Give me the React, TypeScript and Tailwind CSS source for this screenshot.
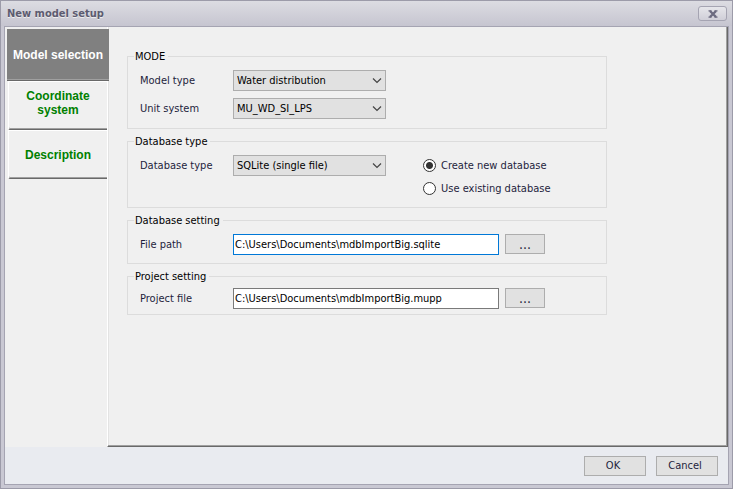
import { useState } from "react";
import type { ReactNode } from "react";

const tabs = [
  { id: "model", title: "Model selection", spacing: "" },
  { id: "coordinate", title: "Coordinate system", spacing: "pb-1.5" },
  { id: "description", title: "Description", spacing: "" },
];

function Group({ title, className, children }: { title: string; className: string; children: ReactNode }) {
  return (
    <fieldset className="border border-[#dcdcdc] px-1.5">
      <legend className="h-[15px] pr-[3px] pl-px leading-[15px] text-black">{title}</legend>
      <div className={`pl-1.5 ${className}`}>{children}</div>
    </fieldset>
  );
}

function Row({ id, label, children }: { id: string; label: string; children: ReactNode }) {
  return (
    <div className="flex items-center">
      <label htmlFor={id} className="w-[93px] shrink-0 leading-[19px]">{label}</label>
      {children}
    </div>
  );
}

function Dropdown({ id, value }: { id: string; value: string }) {
  return (
    <div className="relative w-[153px]">
      <select id={id} className="block h-[21px] w-full appearance-none border border-[#adadad] bg-[#e1e1e1] pl-[3px] pr-5 leading-[19px] text-black outline-none">
        <option>{value}</option>
      </select>
      <svg className="pointer-events-none absolute top-2 right-1" width="10" height="6" viewBox="0 0 10 6" fill="none" stroke="#444" strokeWidth="1.2">
        <path d="M1 0.5 5 4.5 9 0.5" />
      </svg>
    </div>
  );
}

function PathField({ id, value, focused }: { id: string; value: string; focused?: boolean }) {
  return (
    <div className="flex gap-1.5">
      <input
        id={id}
        type="text"
        defaultValue={value}
        className={`h-[21px] w-[266px] border bg-white px-px leading-[19px] text-black outline-none ${focused ? "border-[#0078d7]" : "border-[#7a7a7a]"}`}
      />
      <button type="button" aria-label="Browse" className="h-5 w-10 border border-[#adadad] bg-[#e1e1e1] text-sm leading-[14px]">...</button>
    </div>
  );
}

function Radio({ label, checked, onChange }: { label: string; checked: boolean; onChange: () => void }) {
  return (
    <label className="flex h-[21px] items-center gap-[5px] leading-[19px]">
      <input
        type="radio"
        name="database"
        checked={checked}
        onChange={onChange}
        className="size-[13px] appearance-none rounded-full border border-[#333] bg-white checked:bg-[radial-gradient(circle,#333_3px,#fff_4px)]"
      />
      {label}
    </label>
  );
}

export default function App() {
  const [tab, setTab] = useState("model");
  const [createNew, setCreateNew] = useState(true);

  return (
    <div className="flex min-h-screen flex-col border border-[#9c9ba9] bg-[#c9c8d3] px-[3px] pb-[3px] font-['DejaVu_Sans_Condensed','Noto_Sans',sans-serif] text-[11px] text-[#1e1e3c]">
      <header className="-mx-[3px] flex h-[25px] items-center justify-between bg-linear-to-b from-[#dcdce2] to-[#c6c5d0] pr-[5px] pl-1.5">
        <h1 className="pt-0.5 font-bold text-[#5c5b70] [text-shadow:0_1px_0_#eee]">New model setup</h1>
        <button type="button" aria-label="Close" className="flex h-[15px] w-[29px] items-center justify-center rounded-[3px] border border-[#a5a4b2] bg-linear-to-b from-[#e6e6eb] to-[#d0cfd8]">
          <svg width="10" height="8" viewBox="0 0 10 8" fill="none" stroke="#6c6b80">
            <path strokeWidth="2.4" d="M2 1 8 7M8 1 2 7" />
            <path strokeWidth="1.4" d="M0.5 0.9H3.5M6.5 0.9H9.5M0.5 7.1H3.5M6.5 7.1H9.5" />
          </svg>
        </button>
      </header>
      <div className="flex grow flex-col border border-[#a5a4b2] bg-[#e9ebf0]">
        <main className="flex grow bg-[#f0f0f0]">
          <nav className="flex w-[102px] flex-col pt-0.5 pl-0.5 font-['Liberation_Sans',Arial,sans-serif] text-xs leading-[14px] font-bold">
            {tabs.map((t) =>
              t.id === tab ? (
                <button key={t.id} type="button" onClick={() => setTab(t.id)} className="z-10 -mr-0.5 h-[52px] border-b border-[#696969] bg-[#808080] text-white shadow-[inset_0_-1px_0_#a0a0a0]">
                  {t.title}
                </button>
              ) : (
                <button key={t.id} type="button" onClick={() => setTab(t.id)} className={`ml-px h-[49px] rounded-bl-xs border-t border-b border-l border-t-white border-b-[#696969] border-l-white px-3 text-[#008000] shadow-[inset_0_-1px_0_#a0a0a0] ${t.spacing}`}>
                  {t.title}
                </button>
              )
            )}
          </nav>
          <section className="flex grow flex-col border-r border-b border-l border-[#696969] border-l-white pt-[22px] pr-[120px] pl-[19px] shadow-[inset_-1px_-1px_0_#a0a0a0,inset_1px_0_0_#e3e3e3]">
            <div className="flex flex-col gap-[5px]">
              <Group title="MODE" className="flex flex-col gap-[7px] pt-1.5 pb-[9px]">
                <Row id="model-type" label="Model type"><Dropdown id="model-type" value="Water distribution" /></Row>
                <Row id="unit-system" label="Unit system"><Dropdown id="unit-system" value="MU_WD_SI_LPS" /></Row>
              </Group>
              <Group title="Database type" className="flex items-start gap-[37px] pt-1.5 pb-2">
                <Row id="database-type" label="Database type"><Dropdown id="database-type" value="SQLite (single file)" /></Row>
                <div className="flex flex-col gap-0.5">
                  <Radio label="Create new database" checked={createNew} onChange={() => setCreateNew(true)} />
                  <Radio label="Use existing database" checked={!createNew} onChange={() => setCreateNew(false)} />
                </div>
              </Group>
              <Group title="Database setting" className="pt-1.5 pb-2">
                <Row id="file-path" label="File path"><PathField id="file-path" value="C:\Users\Documents\mdbImportBig.sqlite" focused /></Row>
              </Group>
              <Group title="Project setting" className="pt-1 pb-[5px]">
                <Row id="project-file" label="Project file"><PathField id="project-file" value="C:\Users\Documents\mdbImportBig.mupp" /></Row>
              </Group>
            </div>
          </section>
        </main>
        <footer className="flex justify-end gap-2.5 pt-[9px] pr-2.5 pb-2">
          <button type="button" className="h-5 w-[62px] border border-[#adadad] bg-[#e1e1e1] pr-1 leading-[18px]">OK</button>
          <button type="button" className="h-5 w-[62px] border border-[#adadad] bg-[#e1e1e1] pr-1 leading-[18px]">Cancel</button>
        </footer>
      </div>
    </div>
  );
}
